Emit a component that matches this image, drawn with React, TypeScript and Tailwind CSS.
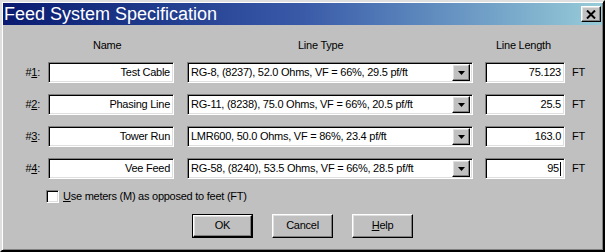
import React from "react";

const rows = [
    { n: "1", name: "Test Cable", type: "RG-8, (8237), 52.0 Ohms, VF = 66%, 29.5 pf/ft", len: "75.123" },
    { n: "2", name: "Phasing Line", type: "RG-11, (8238), 75.0 Ohms, VF = 66%, 20.5 pf/ft", len: "25.5" },
    { n: "3", name: "Tower Run", type: "LMR600, 50.0 Ohms, VF = 86%, 23.4 pf/ft", len: "163.0" },
    { n: "4", name: "Vee Feed", type: "RG-58, (8240), 53.5 Ohms, VF = 66%, 28.5 pf/ft", len: "95", caret: true },
];

const sunken =
    "border border-t-[#808080] border-l-[#808080] border-b-white border-r-white shadow-[inset_1px_1px_0_#000,inset_-1px_-1px_0_#dfdfdf]";
const raised =
    "border border-t-white border-l-white border-b-black border-r-black shadow-[inset_-1px_-1px_0_#808080,inset_1px_1px_0_#dfdfdf]";

const Button: React.FC<{ children: React.ReactNode; isDefault?: boolean }> = ({ children, isDefault }) => (
    <div className={`w-[61px] h-[24px] ${isDefault ? "border border-black" : ""}`}>
        <div className={`w-full h-full flex items-center justify-center ${raised}`}>{children}</div>
    </div>
);

const App: React.FC = () => {
    return (
        <div
            className="w-[605px] h-[252px] bg-[#c0c0c0] text-black border-2 border-t-[#dfdfdf] border-l-[#dfdfdf] border-b-black border-r-black shadow-[inset_1px_1px_0_#fff,inset_-1px_-1px_0_#808080] p-[1px] flex flex-col text-[11px] tracking-[-0.25px]"
            style={{ fontFamily: '"Liberation Sans", Arial, sans-serif' }}
        >
            {/* title bar */}
            <div className="h-[22px] flex items-center justify-between bg-gradient-to-r from-[#0a1a70] via-[#3a5aa8] to-[#98ccd8] pl-[1px] pr-[1px]">
                <span className="text-white text-[18px] leading-none tracking-normal">Feed System Specification</span>
                <div className={`w-[20px] h-[16px] bg-[#c0c0c0] flex items-center justify-center ${raised}`}>
                    <svg width="10" height="9" viewBox="0 0 10 9">
                        <path d="M1 0.5 L9 8.5 M9 0.5 L1 8.5" stroke="#000" strokeWidth="2" />
                    </svg>
                </div>
            </div>

            {/* column headers */}
            <div className="flex mt-[14px] leading-[13px]">
                <div className="w-[45px]" />
                <div className="w-[126px] pl-[45px]">Name</div>
                <div className="w-[13px]" />
                <div className="w-[286px] pl-[111px]">Line Type</div>
                <div className="w-[12px]" />
                <div className="w-[80px] pl-[11px]">Line Length</div>
            </div>

            <div className="flex flex-col gap-[11px] mt-[10px]">
                {rows.map((r) => (
                    <div key={r.n} className="flex items-center h-[21px]">
                        <div className="w-[37px] text-right">
                            #<span className="underline">{r.n}</span>:
                        </div>
                        <div className={`ml-[8px] w-[126px] h-[21px] bg-white flex items-center justify-end pr-[3px] ${sunken}`}>
                            {r.name}
                        </div>
                        <div className={`ml-[13px] w-[286px] h-[21px] bg-white flex items-center justify-between pl-[3px] pr-[2px] ${sunken}`}>
                            <span>{r.type}</span>
                            <div className={`w-[18px] h-[17px] bg-[#c0c0c0] flex items-center justify-center ${raised}`}>
                                <svg width="7" height="4" viewBox="0 0 7 4">
                                    <path d="M0 0 H7 L3.5 4 Z" fill="#000" />
                                </svg>
                            </div>
                        </div>
                        <div className={`ml-[12px] w-[80px] h-[21px] bg-white flex items-center justify-end pr-[3px] ${sunken}`}>
                            {r.len}
                            {r.caret && <span className="w-[1px] h-[14px] bg-black ml-[1px]" />}
                        </div>
                        <div className="ml-[7px]">FT</div>
                    </div>
                ))}
            </div>

            <div className="flex items-center mt-[9px] ml-[43px]">
                <div className={`w-[13px] h-[13px] bg-white ${sunken}`} />
                <span className="ml-[4px]">
                    <span className="underline">U</span>se meters (M) as opposed to feet (FT)
                </span>
            </div>

            <div className="flex gap-[19px] mt-[9px] ml-[189px]">
                <Button isDefault>OK</Button>
                <Button>Cancel</Button>
                <Button>
                    <span>
                        <span className="underline">H</span>elp
                    </span>
                </Button>
            </div>
        </div>
    );
};

export default App;
